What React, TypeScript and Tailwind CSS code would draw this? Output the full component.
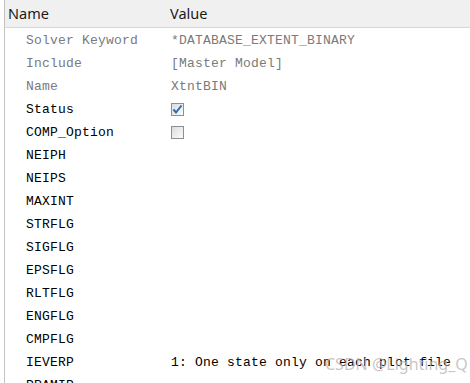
import React from "react";

type Row = {
  name: string;
  value?: string;
  check?: boolean;
  dim?: boolean;
};

const rows: Row[] = [
  { name: "Solver Keyword", value: "*DATABASE_EXTENT_BINARY", dim: true },
  { name: "Include", value: "[Master Model]", dim: true },
  { name: "Name", value: "XtntBIN", dim: true },
  { name: "Status", check: true },
  { name: "COMP_Option", check: false },
  { name: "NEIPH" },
  { name: "NEIPS" },
  { name: "MAXINT" },
  { name: "STRFLG" },
  { name: "SIGFLG" },
  { name: "EPSFLG" },
  { name: "RLTFLG" },
  { name: "ENGFLG" },
  { name: "CMPFLG" },
  { name: "IEVERP", value: "1: One state only on each plot file" },
  { name: "PRAMIP" },
];

const Checkbox: React.FC<{ checked: boolean }> = ({ checked }) => (
  <span className="flex h-[13px] w-[13px] items-center justify-center border border-[#8e8f8f] bg-gradient-to-br from-[#dcdcdc] to-[#fbfbfb]">
    {checked && (
      <svg width="11" height="11" viewBox="0 0 11 11">
        <path d="M1.5 5.5 L4 8.5 L9.5 1.5" fill="none" stroke="#2a6ab8" strokeWidth="2" />
      </svg>
    )}
  </span>
);

const App: React.FC = () => {
  return (
    <div className="relative flex h-[383px] w-[470px] overflow-hidden bg-white">
      <div className="w-[4px] shrink-0" />
      <div className="flex-1 border-l border-[#c4c4c4]">
        <div className="flex h-[28px] items-center border-b border-[#d6d6d6] bg-[#f0f0f0] pt-[1px] text-[14.5px] text-[#1a1a1a] font-['Noto_Sans',sans-serif]">
          <div className="w-[165px] pl-[3px]">Name</div>
          <div>Value</div>
        </div>
        <div className="pt-[1px] font-['Liberation_Mono',monospace] text-[13px] tracking-[0.2px]">
          {rows.map((r) => (
            <div
              key={r.name}
              className={`flex h-[23px] items-center ${r.dim ? "text-[#7a7a7a]" : "text-[#000]"}`}
            >
              <div className="w-[166px] pl-[21px] whitespace-nowrap">{r.name}</div>
              <div className="whitespace-nowrap">
                {r.check !== undefined ? <Checkbox checked={r.check} /> : r.value}
              </div>
            </div>
          ))}
        </div>
      </div>
      <div className="pointer-events-none absolute left-[325px] top-[352px] text-[16px] text-[#b8b8b8]/80 font-['Noto_Sans',sans-serif]">
        CSDN @Lighting_Q
      </div>
    </div>
  );
};

export default App;
